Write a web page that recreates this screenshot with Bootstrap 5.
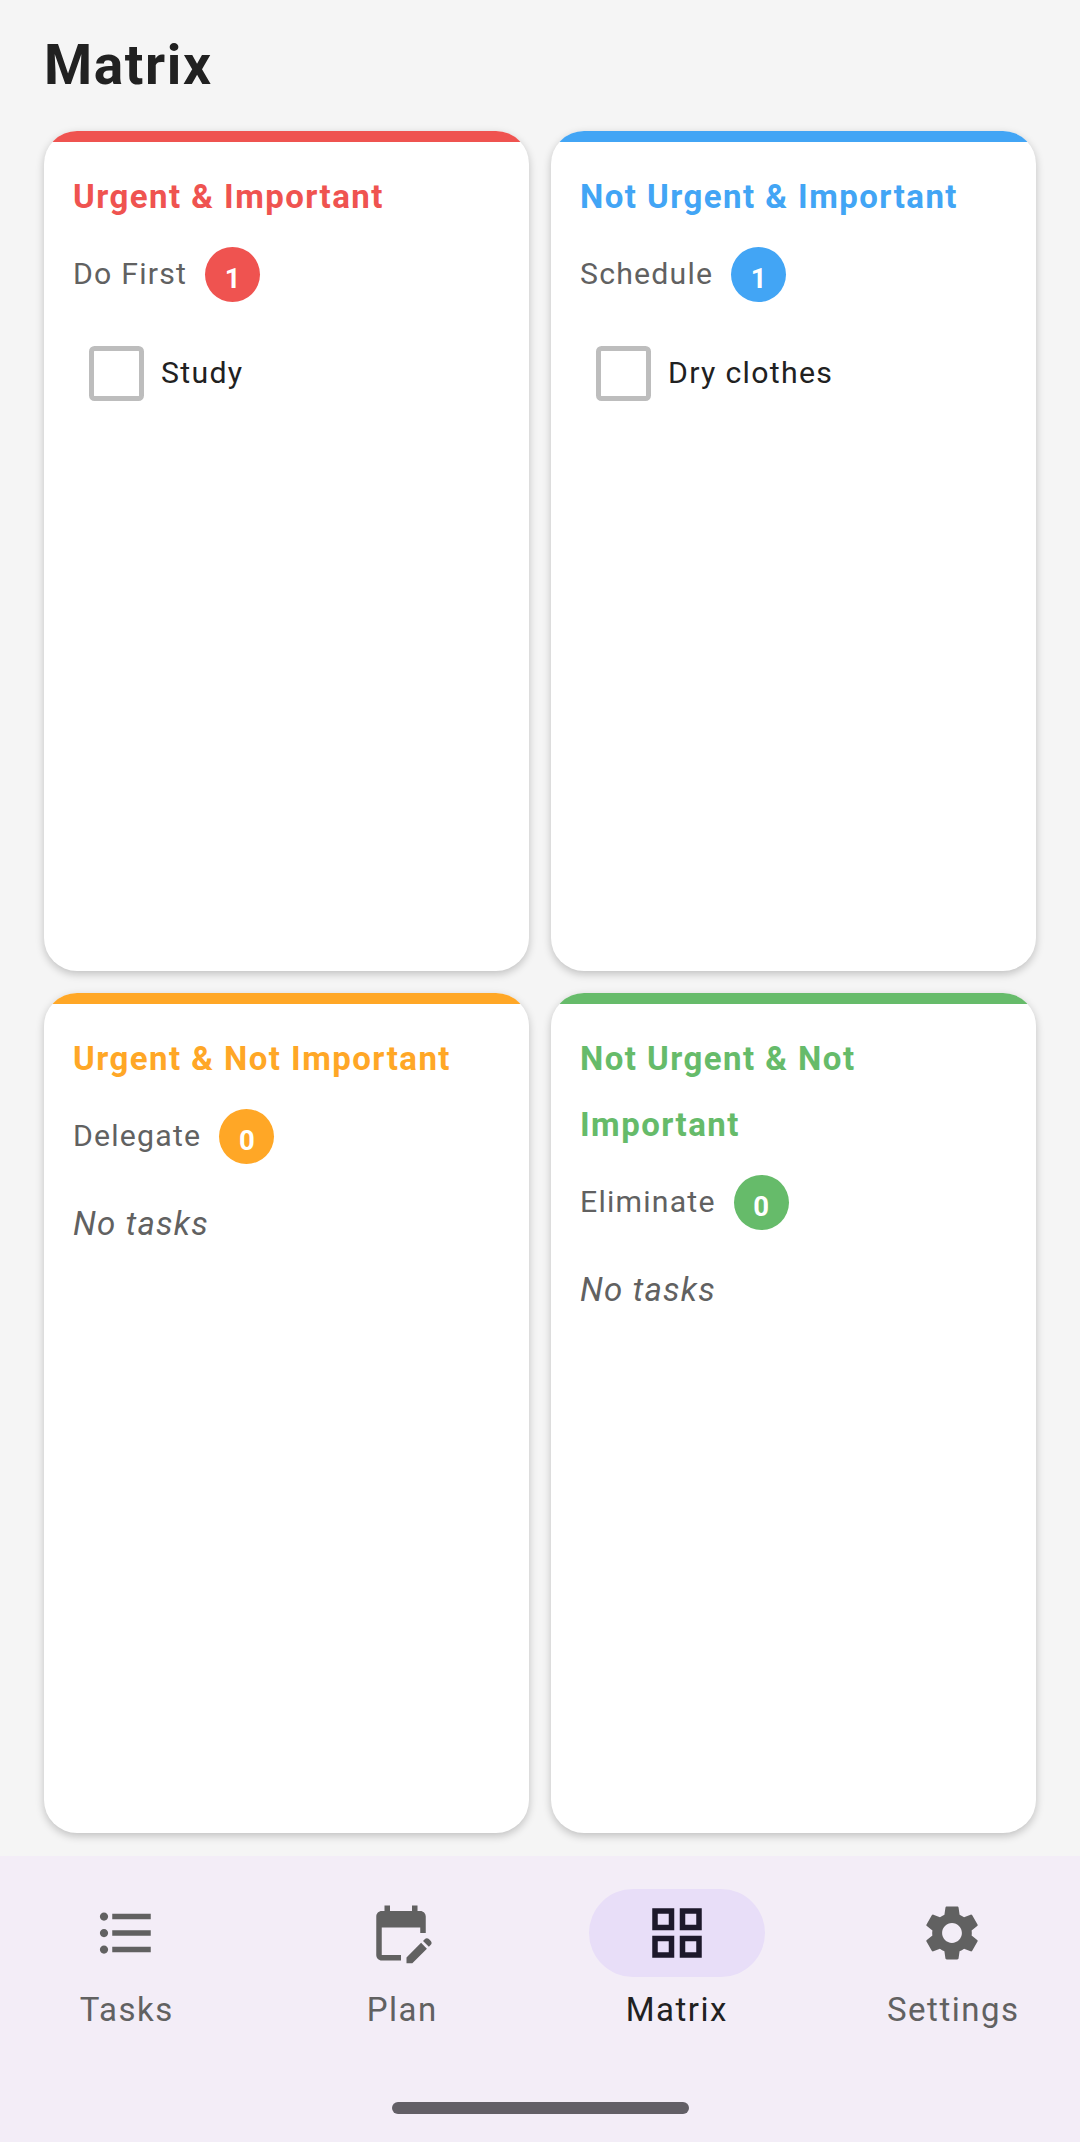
<!DOCTYPE html>
<html lang="en">

<head>
    <meta charset="UTF-8">
    <meta name="viewport" content="width=device-width, initial-scale=1.0">
    <title>Matrix</title>
    <link rel="stylesheet" href="https://cdn.jsdelivr.net/npm/bootstrap@5.3.3/dist/css/bootstrap.min.css">
    <style>
        body {
            width: 1080px;
            height: 2142px;
            overflow: hidden;
            background: #f5f5f5;
            font-family: Roboto, "Liberation Sans", sans-serif;
            color: #212121;
        }

        .page-title {
            height: 131px;
            margin: 0;
            padding: 32px 44px 0;
            font-size: 55px;
            line-height: 66px;
            font-weight: 700;
            letter-spacing: 1.6px;
            color: #212121;
        }

        .quad-grid {
            flex: 1 1 0;
            min-height: 0;
            display: grid;
            grid-template-columns: 1fr 1fr;
            grid-template-rows: 1fr 1fr;
            gap: 22px;
            padding: 0 44px 23px;
        }

        .quad-card {
            border: 0;
            border-radius: 33px;
            overflow: hidden;
            background: #fff;
            box-shadow: 0 3px 9px rgba(0, 0, 0, .22);
        }

        .quad-stripe {
            height: 11px;
            flex: none;
            background: var(--tone);
        }

        .quad-body {
            padding: 22px 29px 0;
        }

        .quad-title {
            margin: 0;
            font-size: 33px;
            line-height: 66px;
            font-weight: 700;
            letter-spacing: 1.45px;
            color: var(--tone);
        }

        .quad-sub {
            height: 55px;
            margin-top: 17px;
            gap: 18px;
            font-size: 30.25px;
            letter-spacing: 1.2px;
            color: #616161;
        }

        .line-text {
            padding-bottom: 2px;
        }

        .count-dot {
            width: 55px;
            height: 55px;
            padding-top: 9px;
            border-radius: 50%;
            background: var(--tone);
            color: #fff;
            font-size: 27.5px;
            font-weight: 700;
            letter-spacing: 0;
        }

        .task-row {
            height: 55px;
            margin-top: 44px;
            padding-left: 16px;
            gap: 17px;
            font-size: 30.25px;
            letter-spacing: 1.3px;
            color: #212121;
        }

        .task-box {
            width: 55px;
            height: 55px;
            flex: none;
            border: 5.5px solid #bdbdbd;
            border-radius: 5.5px;
        }

        .no-tasks {
            margin: 39px 0 0;
            font-size: 33px;
            line-height: 42px;
            font-style: italic;
            letter-spacing: 1.2px;
            color: #616161;
        }

        .bottom-bar {
            height: 286px;
            flex: none;
            background: #f3edf7;
        }

        .bar-items {
            margin: 0 -12px;
            padding-top: 33px;
        }

        .bar-item {
            width: 275.5px;
            color: #616161;
            font-size: 33px;
            line-height: 44px;
            letter-spacing: 1.5px;
        }

        .bar-item.is-active {
            color: #212121;
        }

        .bar-label {
            padding-left: 2px;
        }

        .is-active .bar-label {
            padding-left: 0;
        }

        .bar-pill {
            width: 176px;
            height: 88px;
            margin-bottom: 11px;
            border-radius: 44px;
        }

        .is-active .bar-pill {
            background: #e8def8;
        }

        .bar-pill svg {
            width: 66px;
            height: 66px;
            fill: #616161;
        }

        .is-active .bar-pill svg {
            fill: #1d192b;
        }

        .home-line {
            width: 297px;
            height: 12px;
            margin: 70px auto 0;
            border-radius: 6px;
            background: #625f66;
        }

        .tone-red { --tone: #ef5350; }
        .tone-blue { --tone: #42a5f5; }
        .tone-orange { --tone: #ffa726; }
        .tone-green { --tone: #66bb6a; }
    </style>
</head>

<body>
    <div class="d-flex flex-column vh-100">
        <h1 class="page-title">Matrix</h1>

        <div class="quad-grid">
            <div class="card quad-card tone-red">
                <div class="quad-stripe"></div>
                <div class="quad-body">
                    <h2 class="quad-title">Urgent &amp; Important</h2>
                    <div class="quad-sub d-flex align-items-center">
                        <span class="line-text">Do First</span>
                        <span class="count-dot d-flex align-items-center justify-content-center">1</span>
                    </div>
                    <div class="task-row d-flex align-items-center">
                        <span class="task-box"></span>
                        <span class="line-text">Study</span>
                    </div>
                </div>
            </div>

            <div class="card quad-card tone-blue">
                <div class="quad-stripe"></div>
                <div class="quad-body">
                    <h2 class="quad-title">Not Urgent &amp; Important</h2>
                    <div class="quad-sub d-flex align-items-center">
                        <span class="line-text">Schedule</span>
                        <span class="count-dot d-flex align-items-center justify-content-center">1</span>
                    </div>
                    <div class="task-row d-flex align-items-center">
                        <span class="task-box"></span>
                        <span class="line-text">Dry clothes</span>
                    </div>
                </div>
            </div>

            <div class="card quad-card tone-orange">
                <div class="quad-stripe"></div>
                <div class="quad-body">
                    <h2 class="quad-title">Urgent &amp; Not Important</h2>
                    <div class="quad-sub d-flex align-items-center">
                        <span class="line-text">Delegate</span>
                        <span class="count-dot d-flex align-items-center justify-content-center">0</span>
                    </div>
                    <p class="no-tasks">No tasks</p>
                </div>
            </div>

            <div class="card quad-card tone-green">
                <div class="quad-stripe"></div>
                <div class="quad-body">
                    <h2 class="quad-title">Not Urgent &amp; Not Important</h2>
                    <div class="quad-sub d-flex align-items-center">
                        <span class="line-text">Eliminate</span>
                        <span class="count-dot d-flex align-items-center justify-content-center">0</span>
                    </div>
                    <p class="no-tasks">No tasks</p>
                </div>
            </div>
        </div>

        <nav class="bottom-bar">
            <div class="bar-items d-flex">
                <div class="bar-item d-flex flex-column align-items-center">
                    <span class="bar-pill d-flex align-items-center justify-content-center">
                        <svg viewBox="0 0 24 24"><path d="M4 10.5c-.83 0-1.5.67-1.5 1.5s.67 1.5 1.5 1.5 1.5-.67 1.5-1.5-.67-1.5-1.5-1.5zm0-6c-.83 0-1.5.67-1.5 1.5S3.17 7.5 4 7.5 5.5 6.83 5.5 6 4.83 4.5 4 4.5zm0 12c-.83 0-1.5.68-1.5 1.5s.68 1.5 1.5 1.5 1.5-.68 1.5-1.5-.67-1.5-1.5-1.5zM7 19h14v-2H7v2zm0-6h14v-2H7v2zm0-8v2h14V5H7z"/></svg>
                    </span>
                    <span class="bar-label">Tasks</span>
                </div>
                <div class="bar-item d-flex flex-column align-items-center">
                    <span class="bar-pill d-flex align-items-center justify-content-center">
                        <svg viewBox="0 0 24 24"><path d="M5 10h14v2h2V6c0-1.1-.9-2-2-2h-1V2h-2v2H8V2H6v2H5C3.89 4 3.01 4.9 3.01 6L3 20c0 1.1.89 2 2 2h7v-2H5V10zM22.84 16.28l-.71.71-2.12-2.12.71-.71c.39-.39 1.02-.39 1.41 0l.71.71c.39.39.39 1.02 0 1.41zM19.3 15.58L14 20.88V23h2.12l5.3-5.3-2.12-2.12z"/></svg>
                    </span>
                    <span class="bar-label">Plan</span>
                </div>
                <div class="bar-item is-active d-flex flex-column align-items-center">
                    <span class="bar-pill d-flex align-items-center justify-content-center">
                        <svg viewBox="0 0 24 24"><path d="M3 3v8h8V3H3zm6 6H5V5h4v4zm-6 4v8h8v-8H3zm6 6H5v-4h4v4zm4-16v8h8V3h-8zm6 6h-4V5h4v4zm-6 4v8h8v-8h-8zm6 6h-4v-4h4v4z"/></svg>
                    </span>
                    <span class="bar-label">Matrix</span>
                </div>
                <div class="bar-item d-flex flex-column align-items-center">
                    <span class="bar-pill d-flex align-items-center justify-content-center">
                        <svg viewBox="0 0 24 24"><path d="M19.14 12.94c.04-.3.06-.61.06-.94 0-.32-.02-.64-.07-.94l2.03-1.58c.18-.14.23-.41.12-.61l-1.92-3.32c-.12-.22-.37-.29-.59-.22l-2.39.96c-.5-.38-1.03-.7-1.62-.94l-.36-2.54c-.04-.24-.24-.41-.48-.41h-3.84c-.24 0-.43.17-.47.41l-.36 2.54c-.59.24-1.13.57-1.62.94l-2.39-.96c-.22-.08-.47 0-.59.22L2.74 8.87c-.12.21-.08.47.12.61l2.03 1.58c-.05.3-.09.63-.09.94s.02.64.07.94l-2.03 1.58c-.18.14-.23.41-.12.61l1.92 3.32c.12.22.37.29.59.22l2.39-.96c.5.38 1.03.7 1.62.94l.36 2.54c.05.24.24.41.48.41h3.84c.24 0 .44-.17.47-.41l.36-2.54c.59-.24 1.13-.56 1.62-.94l2.39.96c.22.08.47 0 .59-.22l1.92-3.32c.12-.22.07-.47-.12-.61l-2.01-1.58zM12 15.6c-1.98 0-3.6-1.62-3.6-3.6s1.62-3.6 3.6-3.6 3.6 1.62 3.6 3.6-1.62 3.6-3.6 3.6z"/></svg>
                    </span>
                    <span class="bar-label">Settings</span>
                </div>
            </div>
            <div class="home-line"></div>
        </nav>
    </div>

    <script src="https://cdn.jsdelivr.net/npm/bootstrap@5.3.3/dist/js/bootstrap.bundle.min.js"></script>
</body>

</html>
